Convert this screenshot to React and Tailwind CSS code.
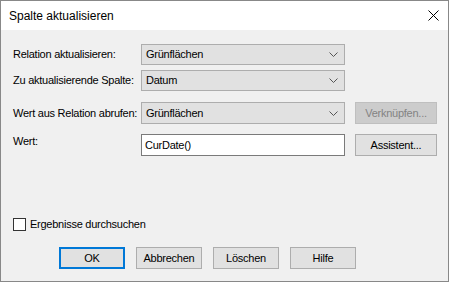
import React from 'react';

// chevron inside the combo boxes
function Chevron() {
  return (
    <svg width="9" height="5" viewBox="0 0 9 5" className="mr-[6px]">
      <path d="M0.5 0.5 L4.5 4.5 L8.5 0.5" fill="none" stroke="#555" strokeWidth="1" />
    </svg>
  );
}

function Combo({ value, className = '' }) {
  return (
    <div className={`flex items-center justify-between w-[204px] bg-[#e1e1e1] border border-[#adadad] pl-[4px] text-black ${className}`}>
      <span>{value}</span>
      <Chevron />
    </div>
  );
}

function Btn({ children, primary, disabled, className = '' }) {
  const cls = primary
    ? 'border-2 border-[#0078d7] bg-[#e1e1e1] text-black'
    : disabled
      ? 'border border-[#bfbfbf] bg-[#cccccc] text-[#838383]'
      : 'border border-[#adadad] bg-[#e1e1e1] text-black';
  return (
    <div className={`flex items-center justify-center h-[22px] ${cls} ${className}`}>{children}</div>
  );
}

export default function App() {
  const font = { fontFamily: '"Liberation Sans", Arial, sans-serif' };
  return (
    <div className="w-[449px] h-[282px] border border-[#888888] bg-[#f0f0f0] flex flex-col text-[11px] leading-none tracking-[-0.25px]" style={font}>
      {/* title bar */}
      <div className="h-[29px] bg-white flex items-center justify-between pl-[8px] pr-[9px] shrink-0">
        <span className="text-[12px] tracking-normal text-black">Spalte aktualisieren</span>
        <svg width="11" height="11" viewBox="0 0 11 11">
          <path d="M0.5 0.5 L10.5 10.5 M10.5 0.5 L0.5 10.5" stroke="#000" strokeWidth="1" />
        </svg>
      </div>

      {/* body */}
      <div className="flex-1 flex flex-col pl-[12px]">
        <div className="flex items-center mt-[14px] h-[21px]">
          <div className="w-[128px]">Relation aktualisieren:</div>
          <Combo value="Grünflächen" className="h-[21px]" />
        </div>
        <div className="flex items-center mt-[5px] h-[21px]">
          <div className="w-[128px]">Zu aktualisierende Spalte:</div>
          <Combo value="Datum" className="h-[21px]" />
        </div>
        <div className="flex items-center mt-[11px] h-[22px]">
          <div className="w-[128px] whitespace-nowrap">Wert aus Relation abrufen:</div>
          <Combo value="Grünflächen" className="h-[22px]" />
          <Btn disabled className="w-[82px] ml-[10px]">Verknüpfen...</Btn>
        </div>
        <div className="flex items-start mt-[10px] h-[22px]">
          <div className="w-[128px] pt-[2px]">Wert:</div>
          <div className="w-[204px] h-[22px] bg-white border border-[#7a7a7a] flex items-center pl-[3px]">CurDate()</div>
          <Btn className="w-[82px] ml-[10px]">Assistent...</Btn>
        </div>

        <label className="flex items-center mt-[62px] h-[13px]">
          <span className="w-[13px] h-[13px] border border-[#333] bg-white" />
          <span className="ml-[4px]">Ergebnisse durchsuchen</span>
        </label>

        <div className="flex mt-[16px] pl-[46px] gap-[11px]">
          <Btn primary className="w-[66px]">OK</Btn>
          <Btn className="w-[66px]">Abbrechen</Btn>
          <Btn className="w-[66px]">Löschen</Btn>
          <Btn className="w-[66px]">Hilfe</Btn>
        </div>
      </div>
    </div>
  );
}
